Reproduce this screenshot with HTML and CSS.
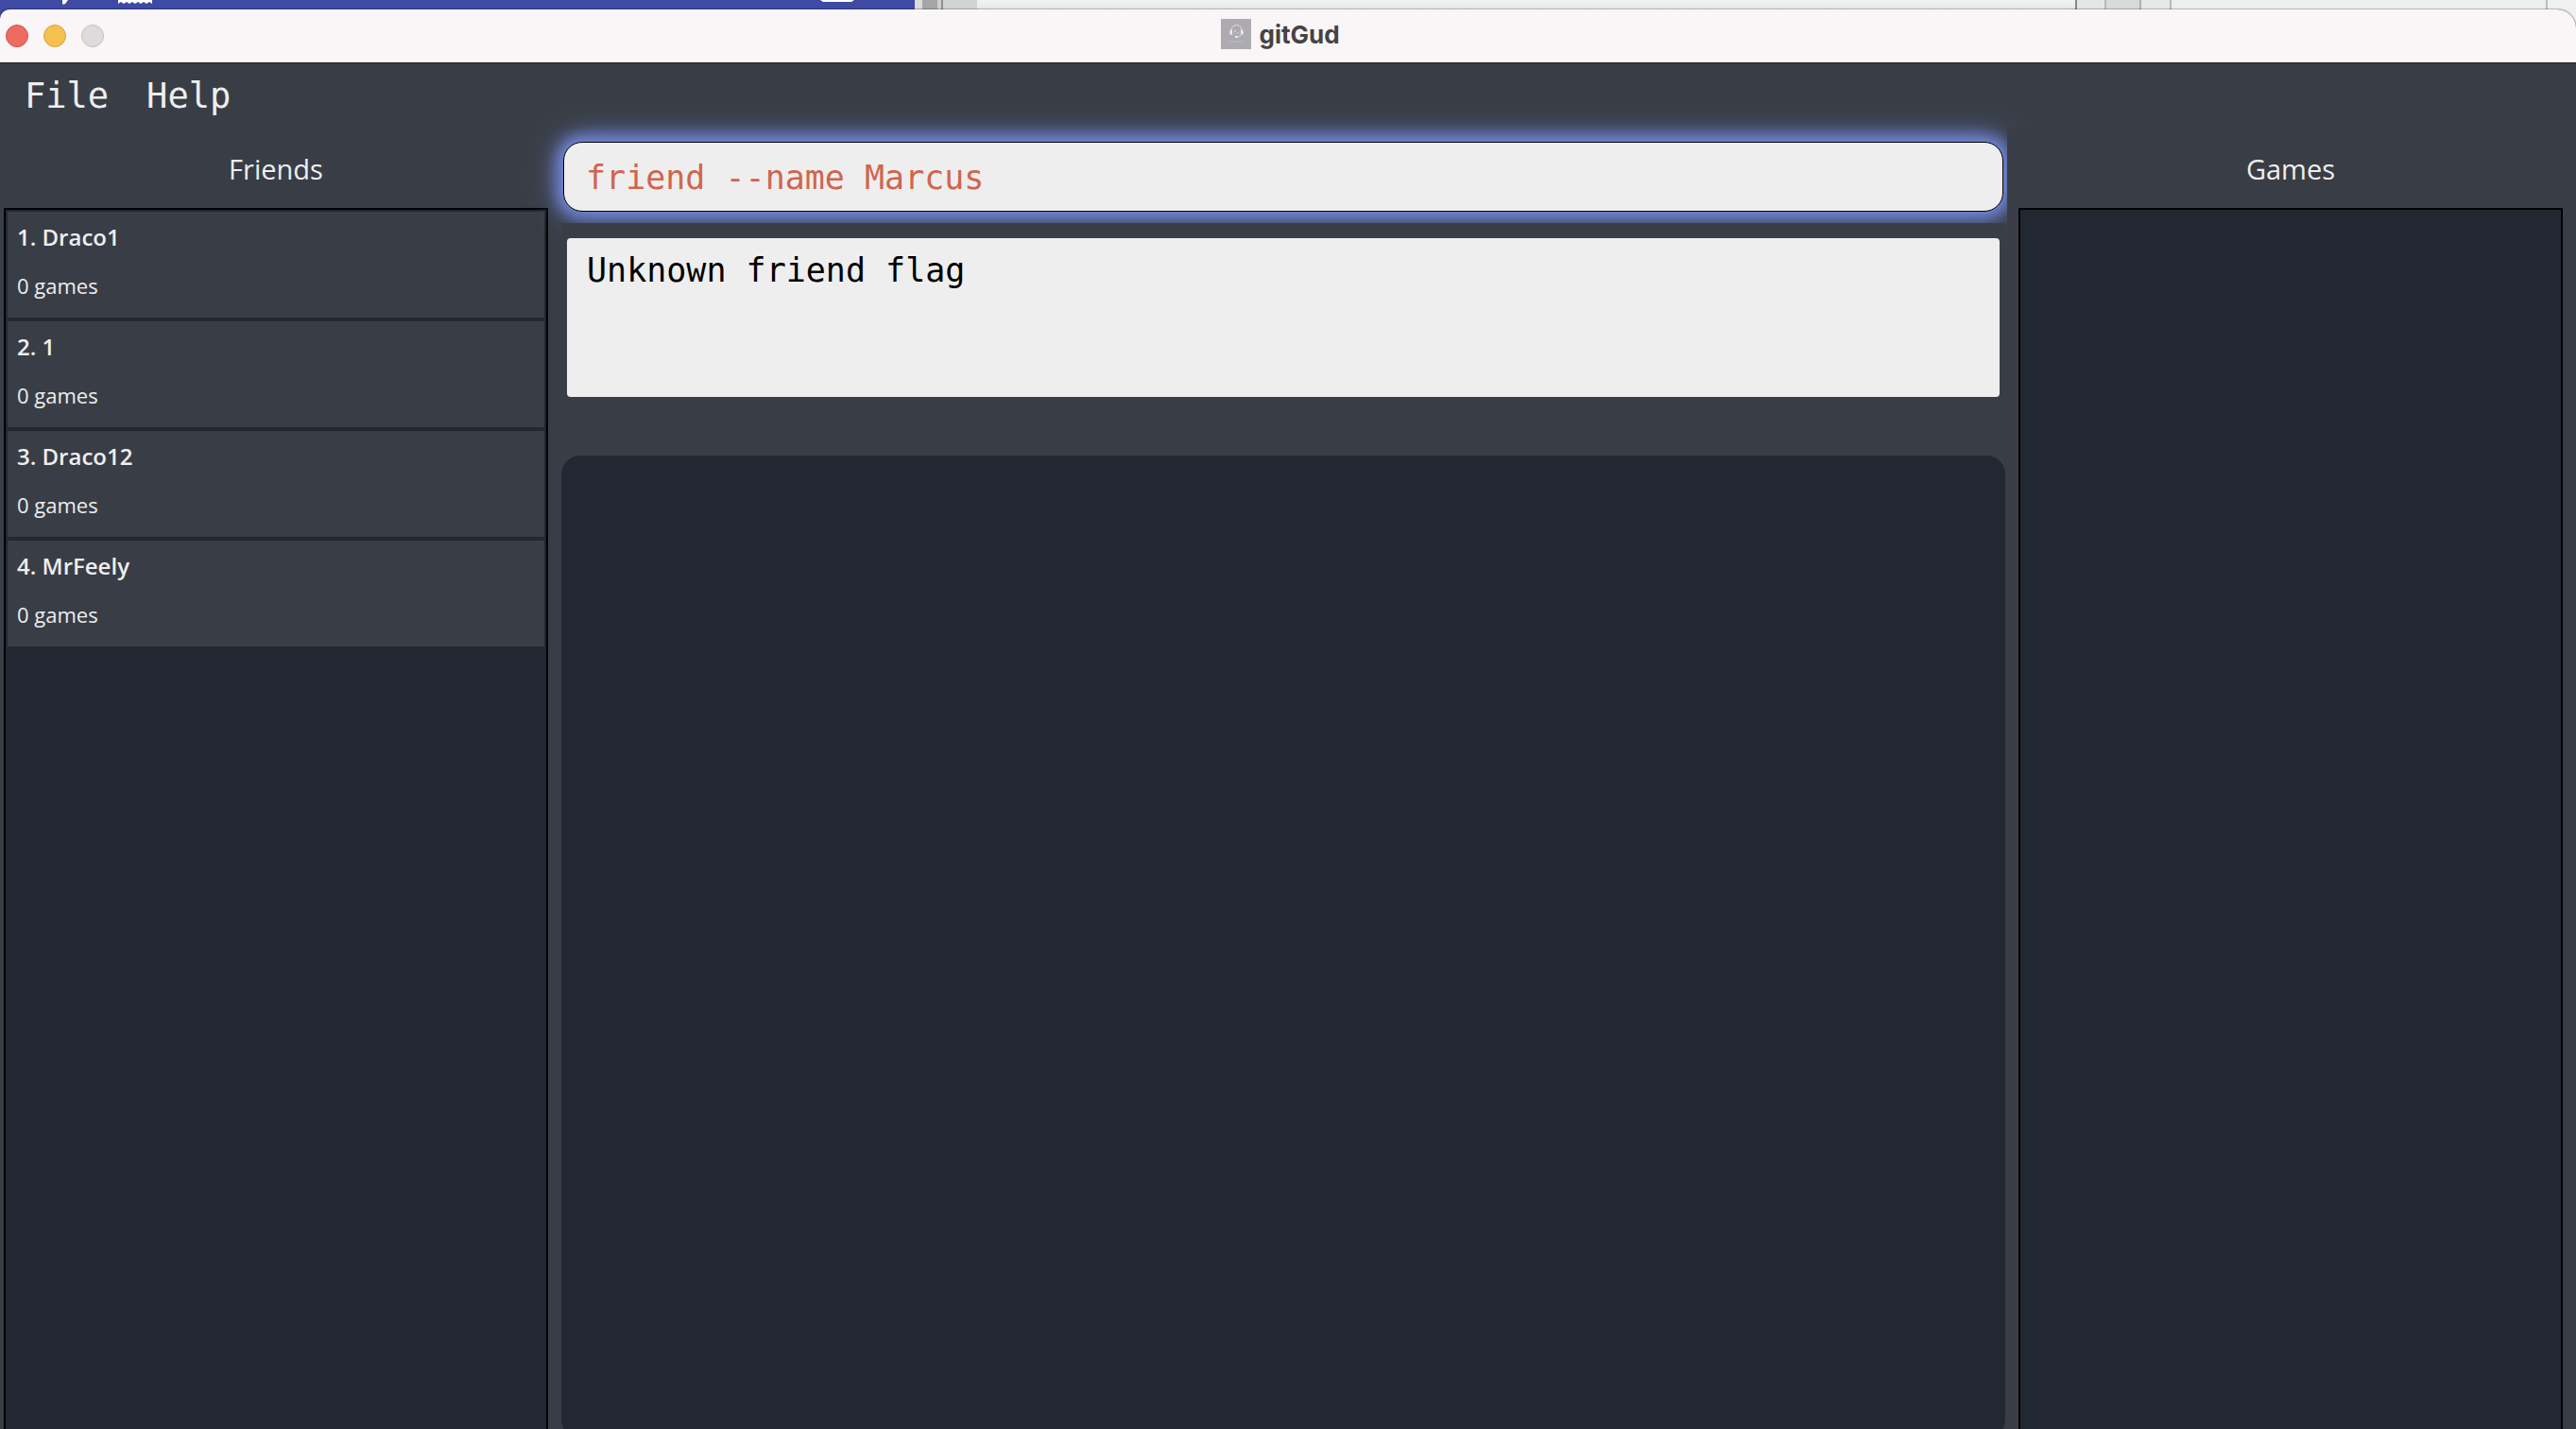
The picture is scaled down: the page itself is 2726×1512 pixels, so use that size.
FILE: index.html
```html
<!DOCTYPE html>
<html lang="en">
<head>
<meta charset="utf-8">
<title>gitGud</title>
<link rel="stylesheet" href="styles.css">
</head>
<body>
<div class="backdrop" aria-hidden="true">
  <svg class="backdrop-blue" width="968" height="20" viewBox="0 0 968 20">
    <rect width="968" height="20" fill="#3f4aa5"/>
    <path d="M66 0h6l-3 4q-3 2-3-1z" fill="#fff"/>
    <path d="M125 0h36v4l-3-2-3 2-3-2-3 2-3-2-3 2-3-2-3 2-3-2-3 2-3-2-3 2z" fill="#fff"/>
    <path d="M868 0h36l-3 2h-30z" fill="#fff"/>
  </svg>
  <div class="backdrop-grey"></div>
  <div class="backdrop-light"></div>
  <div class="backdrop-tabs"></div>
</div>
<div class="window">
  <header class="titlebar">
    <div class="lights">
      <button class="light light-close" aria-label="Close"></button>
      <button class="light light-min" aria-label="Minimize"></button>
      <button class="light light-max" aria-label="Zoom" disabled></button>
    </div>
    <div class="title">
      <svg width="32" height="32" viewBox="0 0 32 32" aria-hidden="true">
        <rect width="32" height="32" fill="#aeabb0"/>
        <path d="M11 12a5 5 0 0 1 11 0" fill="none" stroke="#dedde1" stroke-width="1"/>
        <path d="M9 14q0-2 3-3v6q-3 0-3-3zM24 14q0-2-3-3v6q3 0 3-3z" fill="#e8e7ea"/>
        <path d="M14 12l2 1-2 1M17 15h2M21 17q0 2-3 2" fill="none" stroke="#d3d2d7"/>
        <rect x="15" y="18" width="3" height="2" rx="1" fill="#f2f1f4"/>
        <path d="M9 24h14" stroke="#b4b5cf" stroke-width="2" stroke-dasharray="2 1"/>
      </svg>
      <h1 class="title-text">gitGud</h1>
    </div>
  </header>
  <nav class="menubar">
    <button class="menu">File</button>
    <button class="menu">Help</button>
  </nav>
  <main class="columns">
    <section class="side">
      <h2 class="side-title">Friends</h2>
      <ul class="list">
        <li class="card"><strong class="name">1. Draco1</strong><span class="games">0 games</span></li>
        <li class="card"><strong class="name">2. 1</strong><span class="games">0 games</span></li>
        <li class="card"><strong class="name">3. Draco12</strong><span class="games">0 games</span></li>
        <li class="card"><strong class="name">4. MrFeely</strong><span class="games">0 games</span></li>
      </ul>
    </section>
    <section class="center">
      <div class="command-row">
        <input class="command" type="text" aria-label="Command" value="friend --name Marcus" spellcheck="false">
      </div>
      <div class="result-row">
        <textarea class="result" aria-label="Result" readonly>Unknown friend flag</textarea>
      </div>
      <div class="detail"></div>
    </section>
    <section class="side side-right">
      <h2 class="side-title">Games</h2>
      <ul class="list"></ul>
    </section>
  </main>
</div>
</body>
</html>
```
FILE: styles.css
```css
* { box-sizing: border-box; }

body {
  margin: 0;
  height: 100vh;
  overflow: hidden;
  background: #f0f0f0;
  color: #eeeeee;
  font-family: "Open Sans", sans-serif;
}

h1, h2, ul { margin: 0; padding: 0; }
ul { list-style: none; }
button { padding: 0; border: 0; background: none; color: inherit; }

/* Windows showing behind the application */
.backdrop {
  display: flex;
  height: 10px;
}
.backdrop-blue { flex: none; }
.backdrop-grey {
  flex: none;
  width: 66px;
  height: 20px;
  background: linear-gradient(90deg, #dadada 8px, #a5a5a5 8px 24px, #cfcfcf 24px 28px, #909090 28px 30px, #d3d3d3 30px);
}
.backdrop-light {
  flex: 1;
  background: linear-gradient(#f3f3f3, #e6e6e6);
}
.backdrop-tabs {
  flex: none;
  width: 530px;
  height: 30px;
  background: linear-gradient(90deg, #888888 2px, #e6e6e6 2px 31px, #b8b8b8 31px 33px, #dadada 33px 68px, #b0b0b0 68px 70px, #e8e8e8 70px 100px, #b8b8b8 100px 102px, #efefef 102px 498px, #bcbcbc 498px 500px, #f0f0f0 500px);
}

/* Application window; its lower edge runs past the screen */
.window {
  display: flex;
  flex-direction: column;
  height: 100vh;
  position: relative;
  border-radius: 10px 20px 0 0;
  background: #393e46;
  box-shadow: 0 0 1px 1px rgba(0, 0, 0, 0.25);
}

.titlebar {
  display: grid;
  grid-template-columns: 1fr auto 1fr;
  align-items: center;
  height: 57px;
  padding: 0 22px 0 6px;
  border-bottom: 1px solid #141b25;
  border-radius: 10px 20px 0 0;
  background: #faf6f7;
}
.lights { display: flex; gap: 16px; }
.light {
  width: 24px;
  height: 24px;
  border-radius: 50%;
}
.light-close { background: #ed6b60; border: 1px solid #d5554b; }
.light-min { background: #f5c04f; border: 1px solid #d8a23f; }
.light-max { background: #dfdbdc; border: 1px solid #c3bfc0; }
.title { display: flex; align-items: center; gap: 8px; padding-bottom: 4px; }
.title svg { display: block; }
.title-text {
  padding-top: 2px;
  font: 700 26px/32px Inter, sans-serif;
  color: #454344;
}

.menubar {
  display: flex;
  gap: 40px;
  height: 69px;
  padding: 11px 26px;
}
.menu {
  height: 48px;
  font: 37px/48px "DejaVu Sans Mono", monospace;
}

.columns {
  flex: 1;
  display: grid;
  grid-template-columns: minmax(0, 576fr) minmax(0, 1528fr) minmax(0, 576fr);
  gap: 14px;
  padding: 0 14px 0 4px;
}

.side {
  display: flex;
  flex-direction: column;
}
.side-right {
  z-index: 1;
  background: #393e46;
  box-shadow: -12px 0 0 #393e46;
}
.side-title {
  height: 84px;
  padding-top: 23px;
  font: 400 29px/40px "Open Sans", sans-serif;
  text-align: center;
}
.list {
  flex: 1;
  display: flex;
  flex-direction: column;
  gap: 4px;
  padding: 2px;
  border: 2px solid #000000;
  background: #222831;
}
.card {
  display: flex;
  flex-direction: column;
  gap: 19px;
  height: 112px;
  padding: 11px 10px;
  background: #393d46;
}
.name { font-size: 24px; font-weight: 600; line-height: 32px; }
.games { font-size: 22px; line-height: 32px; }

.center {
  display: flex;
  flex-direction: column;
}
.command-row {
  height: 100px;
  padding: 14px 2px 12px;
}
.command {
  display: block;
  width: 100%;
  height: 74px;
  padding: 1px 23px 0;
  border: 1px solid #000000;
  border-radius: 20px;
  outline: 0;
  background: #eeeeee;
  color: #d0654f;
  font: 35px/48px "DejaVu Sans Mono", monospace;
  box-shadow: 0 0 16px 6px #7489e0, 0 0 32px 6px rgba(116, 137, 224, 0.6);
}
.result-row {
  z-index: 1;
  padding: 16px 6px 62px;
  background: #393e46;
}
.result {
  display: block;
  width: 100%;
  height: 168px;
  padding: 10px 21px;
  border: 0;
  border-radius: 4px;
  outline: 0;
  resize: none;
  background: #eeeeee;
  color: #000000;
  font: 35px/48px "DejaVu Sans Mono", monospace;
}
.detail {
  flex: 1;
  border-radius: 20px;
  background: #222831;
}
```
